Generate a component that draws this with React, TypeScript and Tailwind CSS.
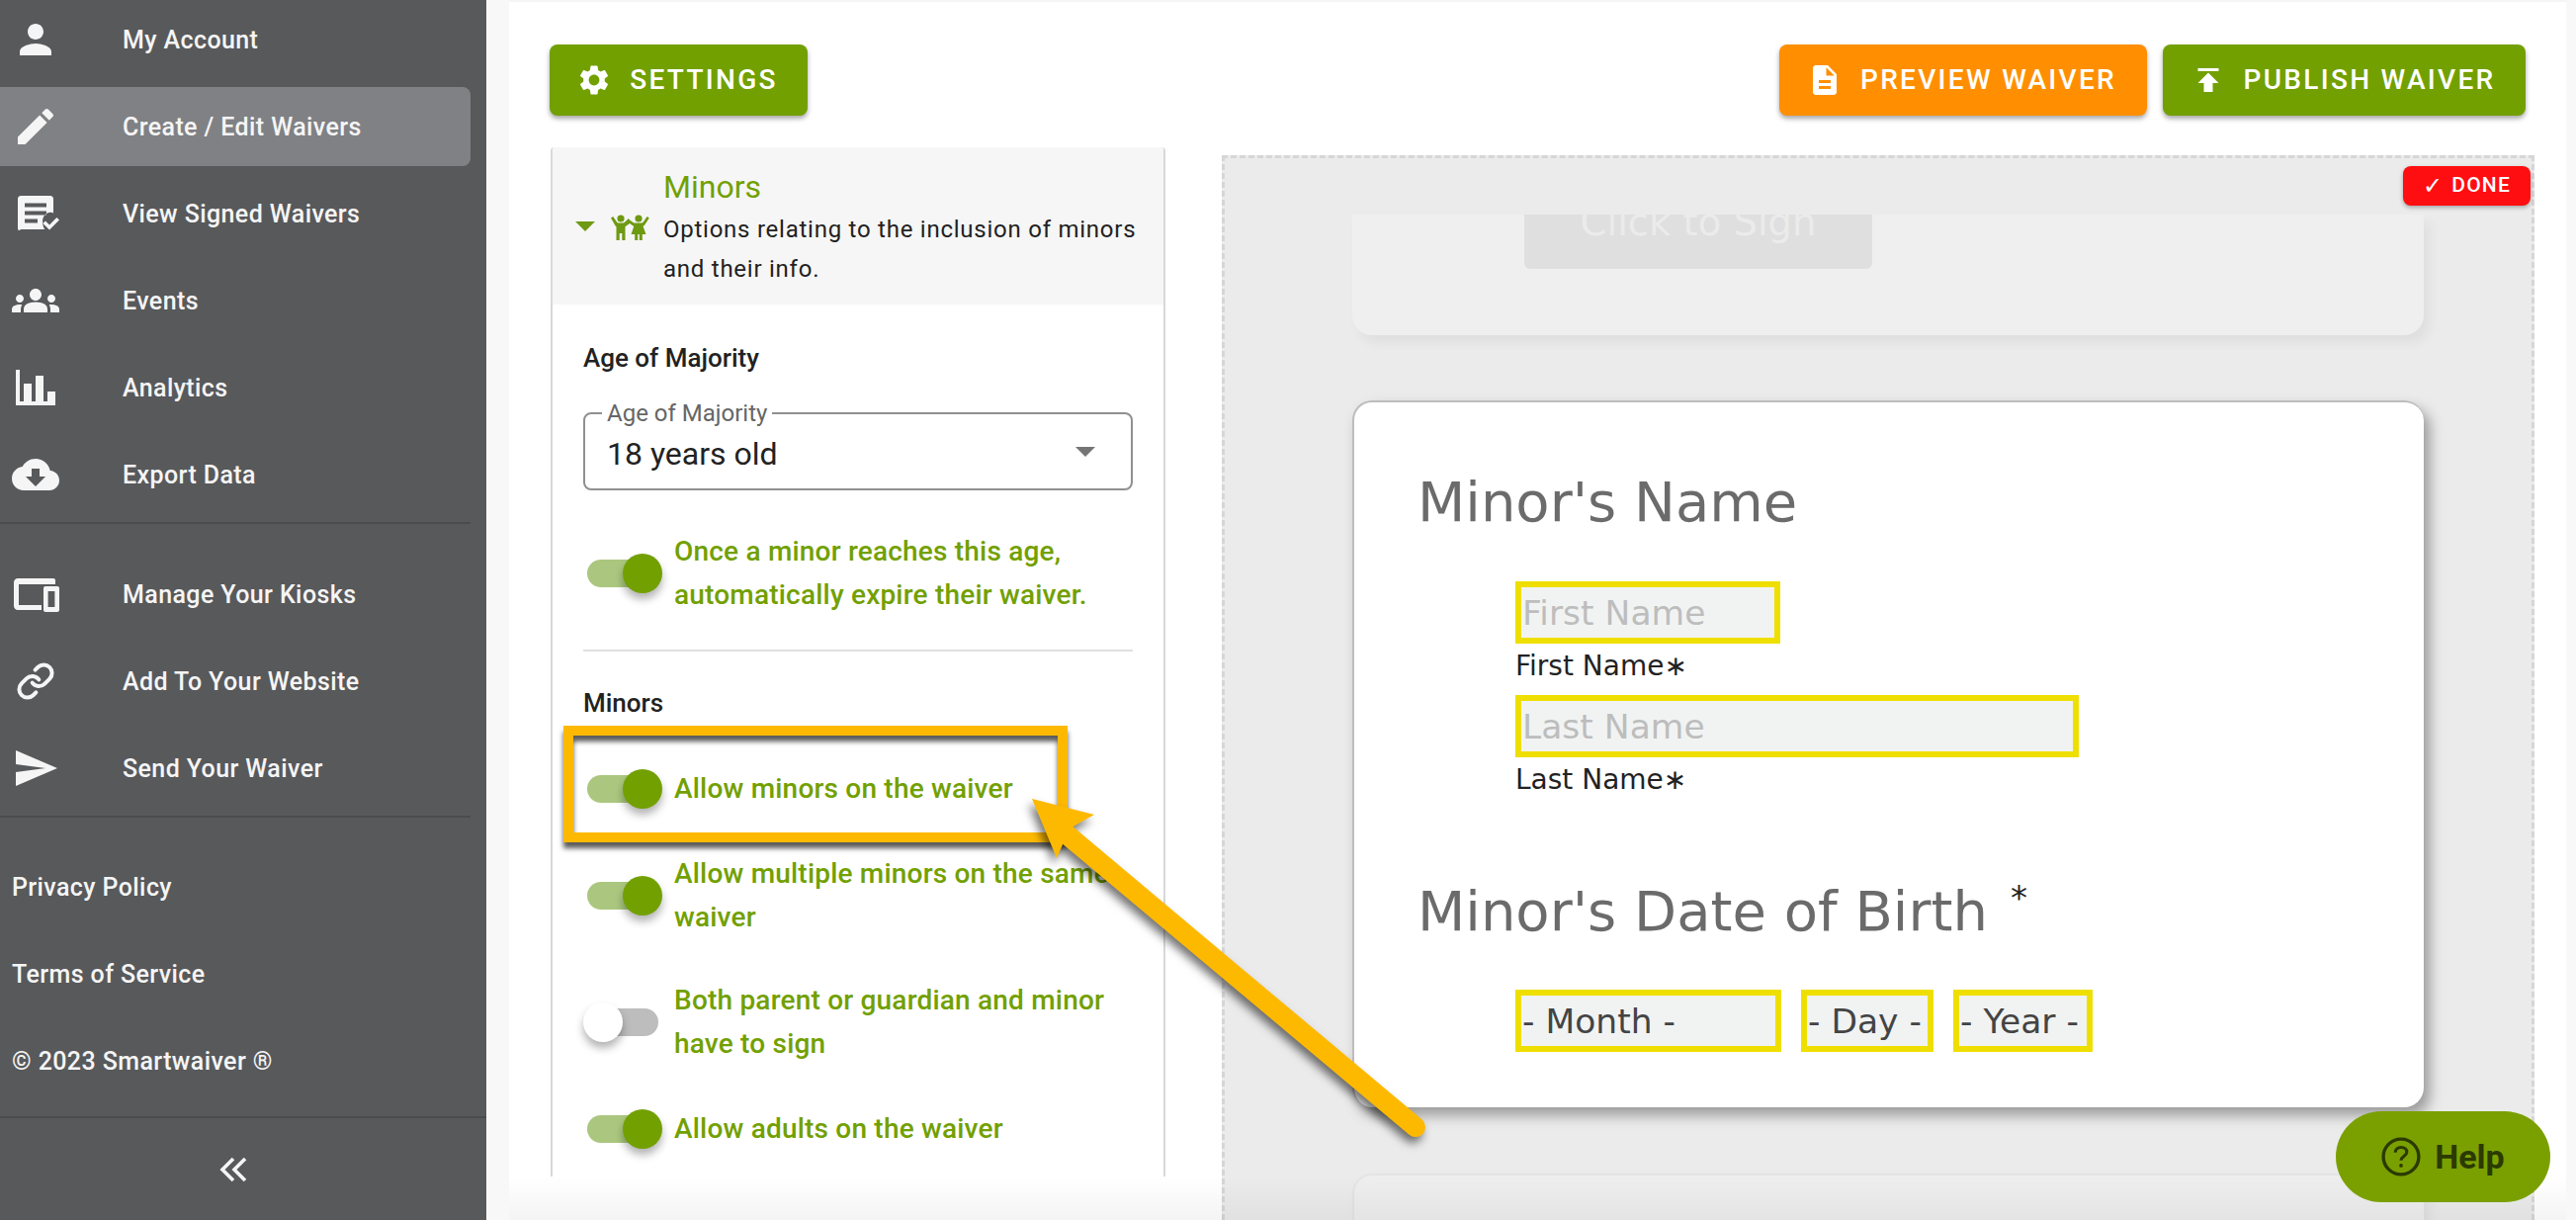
import React from "react";
import { Link as LinkIcon } from "lucide-react";

const I = ({ d, s = 48, c = "" }: { d: string; s?: number; c?: string }) => (
  <svg width={s} height={s} viewBox="0 0 24 24" fill="currentColor" className={c}>
    <path d={d} />
  </svg>
);

const P = {
  person: "M12 12c2.21 0 4-1.79 4-4s-1.79-4-4-4-4 1.79-4 4 1.79 4 4 4zm0 2c-2.67 0-8 1.34-8 4v2h16v-2c0-2.66-5.33-4-8-4z",
  edit: "M3 17.25V21h3.75L17.81 9.94l-3.75-3.75L3 17.25zM20.71 7.04c.39-.39.39-1.02 0-1.41l-2.34-2.34c-.39-.39-1.02-.39-1.41 0l-1.83 1.83 3.75 3.75 1.83-1.83z",
  groups: "M12 12.75c1.63 0 3.07.39 4.24.9 1.08.48 1.76 1.56 1.76 2.73V18H6v-1.61c0-1.18.68-2.26 1.76-2.73 1.17-.52 2.61-.91 4.24-.91zM4 13c1.1 0 2-.9 2-2s-.9-2-2-2-2 .9-2 2 .9 2 2 2zm1.13 1.1c-.37-.06-.74-.1-1.13-.1-.99 0-1.93.21-2.78.58C.48 14.9 0 15.62 0 16.43V18h4.5v-1.61c0-.83.23-1.61.63-2.29zM20 13c1.1 0 2-.9 2-2s-.9-2-2-2-2 .9-2 2 .9 2 2 2zm4 3.43c0-.81-.48-1.53-1.22-1.85-.85-.37-1.79-.58-2.78-.58-.39 0-.76.04-1.13.1.4.68.63 1.46.63 2.29V18H24v-1.57zM12 6c1.66 0 3 1.34 3 3s-1.34 3-3 3-3-1.34-3-3 1.34-3 3-3z",
  chart: "M2 3h2v16h2v-9h4v9h2V6h4v13h2v-5h4v7H2z",
  cloud: "M19.35 10.04C18.67 6.59 15.64 4 12 4 9.11 4 6.6 5.64 5.35 8.04 2.34 8.36 0 10.91 0 14c0 3.31 2.69 6 6 6h13c2.76 0 5-2.24 5-5 0-2.64-2.05-4.78-4.65-4.96zM17 13l-5 5-5-5h3V9h4v4h3z",
  devices: "M1 6c0-1.1.9-2 2-2h18c.6 0 1 .4 1 1v2H3.5v10.5H15V20H3c-1.1 0-2-.9-2-2zm22 2h-6c-.55 0-1 .45-1 1v11c0 .55.45 1 1 1h6c.55 0 1-.45 1-1V9c0-.55-.45-1-1-1zm-1.3 10.5h-3.4v-8h3.4z",
  send: "M2 21l21-9L2 3v7l15 2-15 2v7z",
  gear: "M19.14 12.94c.04-.3.06-.61.06-.94 0-.32-.02-.64-.07-.94l2.03-1.58c.18-.14.23-.41.12-.61l-1.92-3.32c-.12-.22-.37-.29-.59-.22l-2.39.96c-.5-.38-1.03-.7-1.62-.94l-.36-2.54c-.04-.24-.24-.41-.48-.41h-3.84c-.24 0-.43.17-.47.41l-.36 2.54c-.59.24-1.13.57-1.62.94l-2.39-.96c-.22-.08-.47 0-.59.22L2.74 8.87c-.12.21-.08.47.12.61l2.03 1.58c-.05.3-.09.63-.09.94s.02.64.07.94l-2.03 1.58c-.18.14-.23.41-.12.61l1.92 3.32c.12.22.37.29.59.22l2.39-.96c.5.38 1.03.7 1.62.94l.36 2.54c.05.24.24.41.48.41h3.84c.24 0 .44-.17.47-.41l.36-2.54c.59-.24 1.13-.56 1.62-.94l2.39.96c.22.08.47 0 .59-.22l1.92-3.32c.12-.22.07-.47-.12-.61l-2.01-1.58zM12 15.6c-1.98 0-3.6-1.62-3.6-3.6s1.62-3.6 3.6-3.6 3.6 1.62 3.6 3.6-1.62 3.6-3.6 3.6z",
  doc: "M14 2H6c-1.1 0-1.99.9-1.99 2L4 20c0 1.1.89 2 1.99 2H18c1.1 0 2-.9 2-2V8l-6-6zm2 16H8v-2h8v2zm0-4H8v-2h8v2zm-3-5V3.5L18.5 9H13z",
  publish: "M5 4v2h14V4H5zm0 10h4v6h6v-6h4l-7-7-7 7z",
};

const SignedIcon = () => (
  <svg width="48" height="48" viewBox="0 0 24 24" fill="currentColor">
    <path
      fillRule="evenodd"
      d="M4.5 3h15c.8 0 1.5.7 1.5 1.5v7.2c-.9-.5-2-.5-3 0-1.8.9-2.7 2.8-2.4 4.8-.1.9.3 2.3 1 3.5H4.5C3.7 21 3 20.3 3 19.5v-15C3 3.7 3.7 3 4.5 3zM6.5 6.7v2h11v-2zM6.5 10.7v2h11v-2zM6.5 14.7v2h6.5v-2z"
    />
    <path d="M15.7 17l1.3-1.3 2 2 3.7-3.7 1.3 1.3-5 5z" />
  </svg>
);

const Row = ({ icon, label, active }: { icon: React.ReactNode; label: string; active?: boolean }) => (
  <div className={`flex h-20 items-center rounded-r-lg pl-3 ${active ? "bg-[#808184]" : ""}`}>
    <span className="flex h-12 w-12 items-center justify-center">{icon}</span>
    <span className="ml-[64px] mt-[1px] text-[25px] font-medium tracking-[0.4px]">{label}</span>
  </div>
);

const Toggle = ({ on = true }: { on?: boolean }) => (
  <span className="relative block h-10 w-20 shrink-0">
    <span className={`absolute inset-x-1 top-1.5 h-7 rounded-full ${on ? "bg-[#abc77f]" : "bg-[#bdbdbd]"}`} />
    <span
      className={`absolute top-0 h-10 w-10 rounded-full shadow-[0_6px_8px_rgba(0,0,0,0.3)] ${
        on ? "right-0 bg-[#72a000]" : "left-0 bg-white"
      }`}
    />
  </span>
);

const Option = ({ on, lines, c = "" }: { on?: boolean; lines: string[]; c?: string }) => (
  <div className={`flex items-center gap-3 ${c}`}>
    <Toggle on={on} />
    <div className="text-[28px] font-medium leading-[44px] tracking-[0.2px] text-[#72a000]">
      {lines.map((l) => (
        <div key={l} className="whitespace-nowrap">{l}</div>
      ))}
    </div>
  </div>
);

const Btn = ({ color, icon, label, w }: { color: string; icon: string; label: string; w: string }) => (
  <div
    className={`flex h-[72px] items-center justify-center gap-[18px] rounded-lg pr-[3px] text-[28px] font-medium uppercase tracking-[2.3px] text-white shadow-[0_3px_5px_rgba(0,0,0,0.35)] ${color} ${w}`}
  >
    <I d={icon} s={36} />
    <span>{label}</span>
  </div>
);

const Field = ({ w, text, dark }: { w: string; text: string; dark?: boolean }) => (
  <div
    className={`flex h-[63px] items-center overflow-hidden whitespace-nowrap border-[6px] border-[#efdf00] bg-[#f1f3f3] pl-[1px] pt-[2px] text-[34.5px] ${
      dark ? "text-[#444444]" : "text-[#bdbdbd]"
    } ${w}`}
  >
    {text}
  </div>
);

const Sidebar = () => (
  <aside className="flex h-full w-[492px] shrink-0 flex-col bg-[#58595b] text-[#f5f5f5]">
    <div className="flex flex-col gap-2 pr-4">
      <Row icon={<I d={P.person} />} label="My Account" />
      <Row icon={<I d={P.edit} />} label="Create / Edit Waivers" active />
      <Row icon={<SignedIcon />} label="View Signed Waivers" />
      <Row icon={<I d={P.groups} />} label="Events" />
      <Row icon={<I d={P.chart} />} label="Analytics" />
      <Row icon={<I d={P.cloud} />} label="Export Data" />
    </div>
    <div className="mr-4 mt-2 h-[2px] bg-[#4b4c4e]" />
    <div className="mt-[31px] flex flex-col gap-2 pr-4">
      <Row icon={<I d={P.devices} />} label="Manage Your Kiosks" />
      <Row icon={<LinkIcon size={40} strokeWidth={2.4} />} label="Add To Your Website" />
      <Row icon={<I d={P.send} />} label="Send Your Waiver" />
    </div>
    <div className="mr-4 mt-2 h-[2px] bg-[#4b4c4e]" />
    <div className="mt-[31px] flex flex-col gap-2 pl-3 text-[25px] font-medium tracking-[0.4px]">
      <div className="flex h-20 items-center">Privacy Policy</div>
      <div className="flex h-20 items-center">Terms of Service</div>
      <div className="flex h-20 items-center">© 2023 Smartwaiver ®</div>
    </div>
    <div className="mt-[15px] h-[2px] bg-[#4b4c4e]" />
    <div className="flex flex-1 items-start justify-center pr-[20px] pt-[39px]">
      <svg width="28" height="26" viewBox="0 0 28 26" fill="none" stroke="currentColor" strokeWidth="3.6">
        <path d="M14 2 3 13l11 11M26 2 15 13l11 11" />
      </svg>
    </div>
  </aside>
);

const KidsIcon = () => (
  <svg width="40" height="26" viewBox="0 0 40 26" fill="#6e9a12">
    <circle cx="11" cy="4" r="3.6" />
    <circle cx="29" cy="4" r="3.6" />
    <path d="M1 3.5 3.2 2 7 7.5c.6.8 1.4 1 2.2 1h3.6c1 0 1.8-.4 2.5-1L18.8 4l1.2 1.5L23.5 8c.7.5 1.2.5 2.3.5h6c.9 0 1.5-.3 2-1L37.6 2l2.2 1.5-4.6 7c-.4.6-1 1-1.7 1.3l3 8.2h-3.7V26h-3v-6h-1.6v6h-3v-6h-3.7l2.7-8L20 9l-4.5 3.2V26h-3.2v-7h-2.6v7H6.5V12.2C5.8 11.8 5.3 11.2 5 10.6z" />
  </svg>
);

const SettingsPanel = () => (
  <div className="h-[1041px] w-[622px] shrink-0 overflow-hidden rounded-t-[4px] border-x-2 border-[#d8d8d8]">
    <div className="flex h-[159px] items-center bg-[#f6f6f6] pl-[23px]">
      <span className="h-0 w-0 border-x-[10px] border-t-[10px] border-x-transparent border-t-[#6e9a12]" />
      <span className="ml-[15px] mt-[3px]"><KidsIcon /></span>
      <div className="ml-[14px] mt-[3px]">
        <div className="text-[32px] leading-[40px] text-[#72a000]">Minors</div>
        <div className="mt-[3px] text-[24px] leading-[40px] tracking-[0.75px] text-[#222222]">
          Options relating to the inclusion of minors
          <br />
          and their info.
        </div>
      </div>
    </div>
    <div className="px-[31px]">
      <div className="mt-[36px] h-9 text-[26px] font-medium leading-9 text-[#222222]">Age of Majority</div>
      <div className="relative mt-[37px] flex h-[79px] w-[556px] items-center justify-between rounded-lg border-2 border-[#909090] pl-[22px] pr-9">
        <span className="absolute -top-[15px] left-[17px] bg-white px-[5px] text-[24px] leading-[28px] text-[#666666]">Age of Majority</span>
        <span className="mt-[4px] text-[32px] text-[#222222]">18 years old</span>
        <span className="h-0 w-0 border-x-[10px] border-t-[10px] border-x-transparent border-t-[#757575]" />
      </div>
      <Option lines={["Once a minor reaches this age,", "automatically expire their waiver."]} c="mt-[40px]" />
      <div className="mt-[33px] h-[2px] w-[556px] bg-[#e0e0e0]" />
      <div className="mt-[34px] h-9 text-[26px] font-medium leading-9 text-[#222222]">Minors</div>
      <Option lines={["Allow minors on the waiver"]} c="mt-[47px]" />
      <Option lines={["Allow multiple minors on the same", "waiver"]} c="mt-[42px]" />
      <Option on={false} lines={["Both parent or guardian and minor", "have to sign"]} c="mt-10" />
      <Option lines={["Allow adults on the waiver"]} c="mt-[42px]" />
    </div>
  </div>
);

const Canvas = () => (
  <div className="relative ml-[57px] mt-2 flex h-[1077px] w-[1328px] flex-col border-[3px] border-b-0 border-dashed border-[#d6d6d6] bg-[#ebebeb]">
    <div className="absolute right-[1px] top-[8px] z-10 flex h-10 w-[129px] items-center justify-center gap-2 rounded-lg bg-[#ff0e11] text-[21px] font-medium tracking-[1.2px] text-white shadow-[0_2px_4px_rgba(0,0,0,0.3)]">
      <span className="text-[24px] font-normal leading-none">✓</span> DONE
    </div>
    <div className="mt-[57px] flex-1 overflow-hidden pl-[129px]">
      <div className="relative h-[122px] w-[1084px] rounded-b-[20px] bg-[#efefef] pl-[174px] shadow-[6px_8px_12px_rgba(0,0,0,0.05)]">
        <div className="flex h-[55px] w-[352px] items-start justify-center overflow-hidden rounded-b-md bg-[#dfdfdf]">
          <span className="-mt-[19px] font-['DejaVu_Sans'] text-[38.5px] leading-[54px] text-[#ebebeb]">Click to Sign</span>
        </div>
      </div>
      <div className="mt-[66px] h-[715px] w-[1084px] rounded-[20px] border-2 border-b-0 border-r-0 border-[#bdbdbd] bg-white pl-[64px] pt-[67px] font-['DejaVu_Sans'] shadow-[6px_8px_14px_rgba(0,0,0,0.35)]">
        <div className="text-[56px] leading-[68px] text-[#6b6b6b]">Minor&#39;s Name</div>
        <div className="ml-[99px] mt-[46px]">
          <Field w="w-[268px]" text="First Name" />
          <div className="mt-[6px] h-[34px] text-[28px] leading-[34px] text-[#222222]">First Name∗</div>
          <div className="mt-[12px]"><Field w="w-[570px]" text="Last Name" /></div>
          <div className="mt-[6px] h-[34px] text-[28px] leading-[34px] text-[#222222]">Last Name∗</div>
        </div>
        <div className="mt-[82px] flex items-start text-[56px] leading-[68px] text-[#6b6b6b]">
          Minor&#39;s Date of Birth
          <span className="ml-[23px] mt-[-14px] text-[34px] text-[#222222]">*</span>
        </div>
        <div className="ml-[99px] mt-[45px] flex gap-5">
          <Field w="w-[269px]" text="- Month -" dark />
          <Field w="w-[134px]" text="- Day -" dark />
          <Field w="w-[141px]" text="- Year -" dark />
        </div>
      </div>
      <div className="mt-[67px] h-[200px] w-[1084px] rounded-t-[20px] border-2 border-b-0 border-r-0 border-[#e4e4e4] bg-[#eeeeee] shadow-[6px_8px_14px_rgba(0,0,0,0.05)]" />
    </div>
  </div>
);

const Arrow = () => (
  <svg
    className="pointer-events-none absolute left-[1030px] top-[800px] z-20 drop-shadow-[-3px_6px_5px_rgba(0,0,0,0.55)]"
    width="420"
    height="360"
    viewBox="1030 800 420 360"
  >
    <path d="M1072 838 1432 1140" stroke="#fdb900" strokeWidth="20" strokeLinecap="round" fill="none" />
    <path d="M1044 808 1107 824 1082 838 1069 868z" fill="#fdb900" />
  </svg>
);

export default function App() {
  return (
    <div className="relative flex h-[1234px] w-[2606px] overflow-hidden bg-[#f8f8f8] font-['Roboto',sans-serif]">
      <Sidebar />
      <main className="ml-[23px] mr-[10px] flex h-full flex-1 flex-col border-t-2 border-[#f5f5f5] bg-white">
        <div className="mt-[43px] flex h-[72px] justify-between px-[41px]">
          <Btn color="bg-[#72a000]" icon={P.gear} label="Settings" w="w-[261px]" />
          <div className="flex gap-4">
            <Btn color="bg-[#ff8f00]" icon={P.doc} label="Preview Waiver" w="w-[372px]" />
            <Btn color="bg-[#72a000]" icon={P.publish} label="Publish Waiver" w="w-[367px]" />
          </div>
        </div>
        <div className="mt-8 flex flex-1 pl-[42px]">
          <SettingsPanel />
          <Canvas />
        </div>
      </main>
      <div className="pointer-events-none absolute bottom-0 left-[515px] right-[10px] z-10 h-[44px] bg-gradient-to-b from-transparent to-[rgba(0,0,0,0.045)]" />
      <div className="absolute left-[570px] top-[734px] z-20 h-[118px] w-[510px] border-[10px] border-[#fdb900] shadow-[0_6px_5px_rgba(0,0,0,0.65),inset_0_6px_5px_rgba(0,0,0,0.65)]" />
      <Arrow />
      <div className="absolute left-[2363px] top-[1124px] z-30 flex h-[92px] w-[217px] items-center justify-center gap-[14px] rounded-[46px] bg-[#7aa000] text-[34px] font-bold text-[#2b3a00]">
        <svg width="40" height="40" viewBox="0 0 38 38" fill="none" stroke="currentColor" strokeWidth="3.2">
          <circle cx="19" cy="19" r="17" />
          <path d="M13.5 15c0-3.2 2.4-5 5.5-5s5.5 1.8 5.5 4.6c0 4-5.5 4-5.5 8" strokeWidth="3" />
          <circle cx="19" cy="27.5" r="1.8" fill="currentColor" stroke="none" />
        </svg>
        Help
      </div>
    </div>
  );
}
